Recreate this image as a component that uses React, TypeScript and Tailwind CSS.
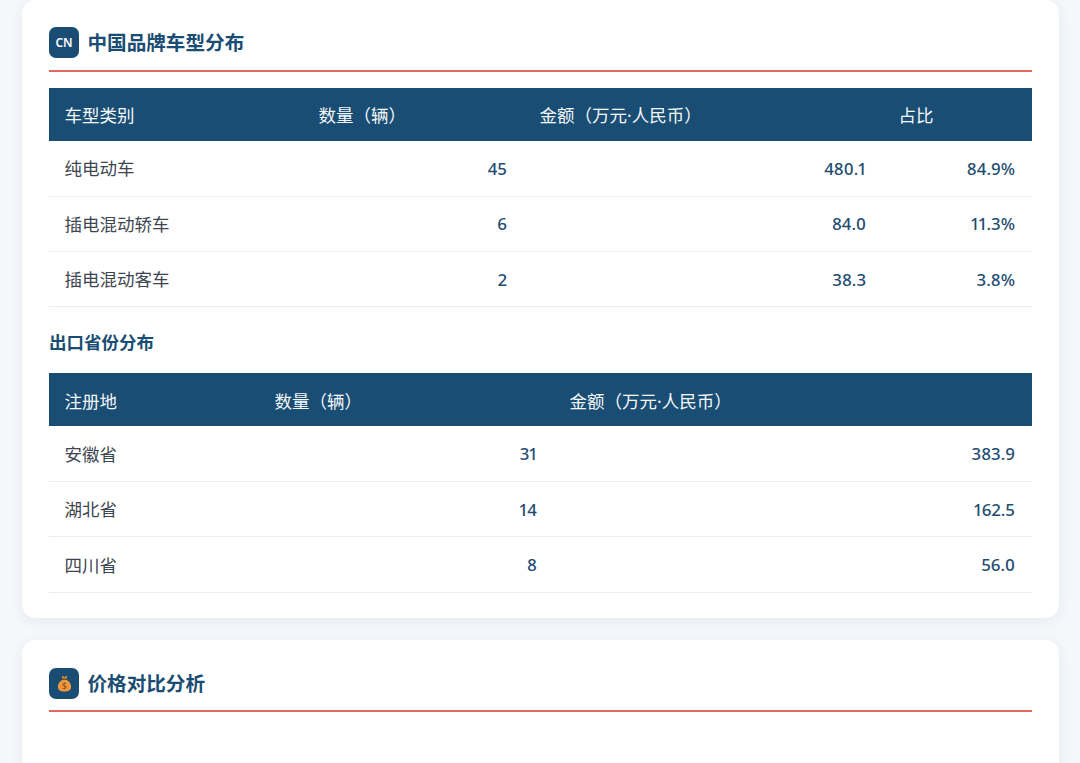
const font = { fontFamily: '"Noto Sans", "Noto Sans CJK SC", sans-serif' };

type Col = { label: string; width: string };

function DataTable({ cols, rows }: { cols: Col[]; rows: string[][] }) {
  return (
    <table className="w-full table-fixed border-collapse">
      <colgroup>
        {cols.map((c) => (
          <col key={c.label} className={c.width} />
        ))}
      </colgroup>
      <thead>
        <tr className="h-[53px] bg-[#1a4d73]">
          {cols.map((c) => (
            <th key={c.label} className="pt-[2px] pr-4 pl-[15.5px] text-left text-[17.5px] font-normal text-[#f4f7fa]">
              {c.label}
            </th>
          ))}
        </tr>
      </thead>
      <tbody>
        {rows.map((row) => (
          <tr key={row[0]} className="h-[55.3px] border-b border-[#e9edf1]">
            {row.map((cell, i) =>
              i === 0 ? (
                <td key={i} className="pr-4 pl-[15.5px] text-[17.5px] text-[#3d4650]">
                  {cell}
                </td>
              ) : (
                <td key={i} className="pr-[17px] pl-4 text-right text-[16.8px] font-medium text-[#1f4d71] proportional-nums">
                  {cell}
                </td>
              ),
            )}
          </tr>
        ))}
      </tbody>
    </table>
  );
}

function SectionTitle({ icon, title, className }: { icon: React.ReactNode; title: string; className: string }) {
  return (
    <div className={`flex items-start gap-[8.5px] border-b-[2.5px] border-[#e0685c] ${className}`}>
      <div className="flex h-[31px] w-[30px] items-center justify-center rounded-[7px] bg-[#1a4d73]">{icon}</div>
      <h2 className="text-[19.6px] leading-[32px] font-bold text-[#1a4d73]">{title}</h2>
    </div>
  );
}

function MoneyBag() {
  return (
    <svg width="17" height="19" viewBox="0 0 18 20">
      <path d="M6 1.5 L9 3 L12 1.5 L11.2 5 H6.8 Z" fill="#d98a32" />
      <rect x="6.6" y="4.6" width="4.8" height="1.5" rx="0.7" fill="#8a5a2a" />
      <path d="M6.6 6.2 C3 8 1.8 11 2 13.8 C2.2 17 5 18.6 9 18.6 C13 18.6 15.8 17 16 13.8 C16.2 11 15 8 11.4 6.2 Z" fill="#f0973a" />
      <text x="9" y="16" textAnchor="middle" fontSize="9" fill="#7a4a1e" style={font}>
        $
      </text>
    </svg>
  );
}

export default function App() {
  return (
    <div style={font} className="h-[763px] overflow-hidden bg-[#f5f7fb] pr-[21.5px] pl-[22px]">
      <section className="rounded-[14px] bg-white pt-[27px] pr-[26.5px] pb-[25px] pl-[27px] shadow-[0_3px_14px_rgba(30,60,90,0.07)]">
        <SectionTitle
          className="h-[45px]"
          icon={<span className="text-[12px] font-semibold text-white">CN</span>}
          title="中国品牌车型分布"
        />
        <div className="mt-[16px]">
          <DataTable
            cols={[
              { label: "车型类别", width: "w-[254px]" },
              { label: "数量（辆）", width: "w-[221px]" },
              { label: "金额（万元·人民币）", width: "w-[359px]" },
              { label: "占比", width: "w-[149px]" },
            ]}
            rows={[
              ["纯电动车", "45", "480.1", "84.9%"],
              ["插电混动轿车", "6", "84.0", "11.3%"],
              ["插电混动客车", "2", "38.3", "3.8%"],
            ]}
          />
        </div>
        <h3 className="mt-[22px] mb-[17px] text-[17.5px] leading-[27px] font-bold text-[#1a4d73]">出口省份分布</h3>
        <DataTable
          cols={[
            { label: "注册地", width: "w-[210px]" },
            { label: "数量（辆）", width: "w-[295px]" },
            { label: "金额（万元·人民币）", width: "w-[478px]" },
          ]}
          rows={[
            ["安徽省", "31", "383.9"],
            ["湖北省", "14", "162.5"],
            ["四川省", "8", "56.0"],
          ]}
        />
      </section>
      <section className="mt-[22px] h-[300px] rounded-[14px] bg-white pt-[28px] pr-[26.5px] pl-[27px] shadow-[0_3px_14px_rgba(30,60,90,0.07)]">
        <SectionTitle className="h-[44px]" icon={<MoneyBag />} title="价格对比分析" />
      </section>
    </div>
  );
}
